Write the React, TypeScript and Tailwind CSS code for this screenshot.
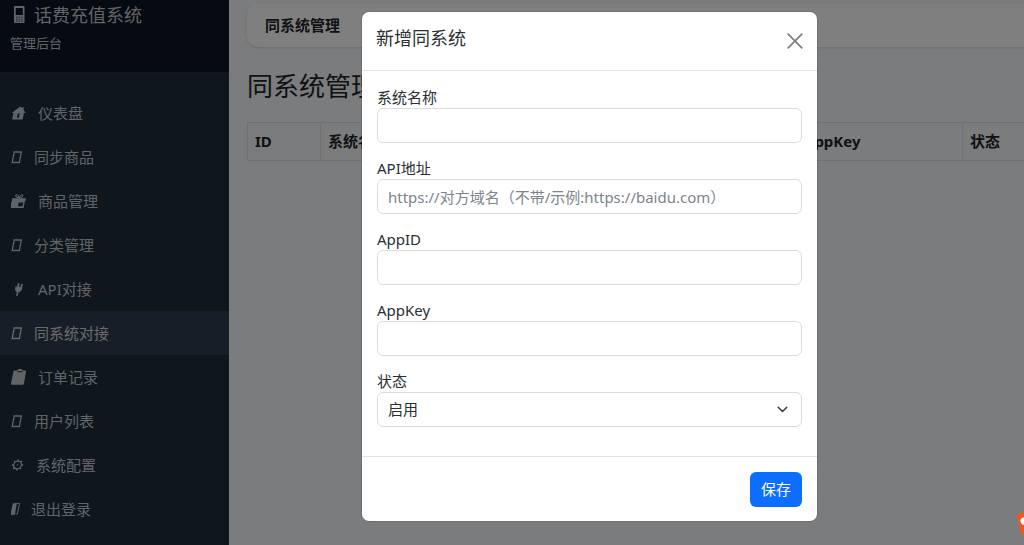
import type { ReactNode } from "react";

function PhoneIcon() {
  return (
    <svg width="12" height="18" viewBox="0 0 12 18" fill="none" aria-hidden="true">
      <path fillRule="evenodd" fill="currentColor" d="M1 0h8.500A1 1 0 0 1 10.500 1v15a1 1 0 0 1-1 1H1a1 1 0 0 1-1-1V1A1 1 0 0 1 1 0ZM1.700 2v7h7.100V2ZM2 10.700v.8h1.600v-.8Zm2.500 0v.8h1.600v-.8Zm2.500 0v.8h1.600v-.8ZM2 12.700v.8h1.600v-.8Zm2.500 0v.8h1.600v-.8Zm2.500 0v.8h1.600v-.8ZM2 14.700v.8h1.600v-.8Zm2.500 0v.8h1.600v-.8Zm2.500 0v.8h1.600v-.8Z" />
    </svg>
  );
}

function BoxIcon() {
  return (
    <svg width="12" height="14" viewBox="0 0 12 14" fill="none" stroke="currentColor" strokeWidth="1.300" aria-hidden="true">
      <path d="M3.200 2H10.300L8.300 12.500H1.200Z" />
    </svg>
  );
}

function HomeIcon() {
  return (
    <svg width="16" height="16" viewBox="0 0 16 16" fill="currentColor" aria-hidden="true">
      <path fillRule="evenodd" d="M9.300 1.600L11 3.100L11.300 2.300H12.900L12.500 4.700L14.700 8H12.900L11.700 14.500H1.200L2.400 8H.7ZM6.700 8.500L5.900 12.700H7.900L8.700 8.500Z" />
    </svg>
  );
}

function GiftIcon() {
  return (
    <svg width="16" height="16" viewBox="0 0 16 16" aria-hidden="true">
      <path fill="currentColor" fillRule="evenodd" d="M1.300 5.200H15L14.400 8H13.900L12.700 15H-.8L.4 8.500H.8ZM7.700 9.500L6.900 13.300H11.500L12.200 9.500Z" />
      <path fill="none" stroke="currentColor" strokeWidth="1.100" d="M8.300 4.900C6.500 4.700 3.900 3.500 4.700 2.200C5.500 1 7.500 2.200 8.300 4.900ZM8.300 4.900C9 2.200 11.200 1 11.700 2.200C12.200 3.700 10.200 4.900 8.300 4.900Z" />
    </svg>
  );
}

function PlugIcon() {
  return (
    <svg width="16" height="16" viewBox="0 0 16 16" aria-hidden="true">
      <path fill="currentColor" d="M4.500 5.300L11.500 6.200L10.900 8.500C10.100 10.300 8.700 11 7.500 11.200L6.700 15H5.200L5.700 11C4.200 10.300 3.800 8.600 4.200 7Z" />
      <path fill="none" stroke="currentColor" strokeWidth="1.800" d="M7 5.800L7.800 2.300M10 6.500L11.200 3" />
    </svg>
  );
}

function ClipboardIcon() {
  return (
    <svg width="16" height="18" viewBox="0 0 16 18" aria-hidden="true">
      <path fill="currentColor" fillRule="evenodd" d="M3.800 2.500H6.400C7 .6 11 .6 11.500 2.500H14.200Q15.200 2.500 15 3.500L12.900 15.700Q12.700 16.700 11.700 16.700H.8Q-.2 16.700 0 15.700L2.300 3.700Q2.600 2.500 3.800 2.500ZM6.500 3.300L6.300 4.300H11.300L11.500 3.300Z" />
    </svg>
  );
}

function GearIcon() {
  return (
    <svg width="14" height="14" viewBox="0 0 14 14" fill="none" stroke="currentColor" aria-hidden="true">
      <g transform="translate(1 0) skewX(-8)">
        <circle cx="6.500" cy="7" r="3.900" strokeWidth="1.200" />
        <circle cx="6.500" cy="7" r=".4" strokeWidth=".8" />
        <path strokeWidth="1.300" d="M6.500 3V1.400M6.500 11v1.600M10.500 7h1.600M2.500 7H.9M9.300 4.200l1.200-1.200M3.700 9.800l-1.200 1.200M9.300 9.800l1.200 1.200M3.700 4.200L2.500 3" />
      </g>
    </svg>
  );
}

function DoorIcon() {
  return (
    <svg width="9" height="14" viewBox="0 0 9 14" aria-hidden="true">
      <path fill="currentColor" d="M1.800 1.500L6 .8L3.800 12.700L-.7 13Z" />
      <path fill="none" stroke="currentColor" d="M6.200 1.500H8.500L6.400 12H4.400" />
    </svg>
  );
}

const navItems: { label: string; icon: ReactNode; active?: boolean }[] = [
  { label: "仪表盘", icon: <HomeIcon /> },
  { label: "同步商品", icon: <BoxIcon /> },
  { label: "商品管理", icon: <GiftIcon /> },
  { label: "分类管理", icon: <BoxIcon /> },
  { label: "API对接", icon: <PlugIcon /> },
  { label: "同系统对接", icon: <BoxIcon />, active: true },
  { label: "订单记录", icon: <ClipboardIcon /> },
  { label: "用户列表", icon: <BoxIcon /> },
  { label: "系统配置", icon: <GearIcon /> },
  { label: "退出登录", icon: <DoorIcon /> },
];

function Sidebar() {
  return (
    <aside className="w-[229px] shrink-0 bg-[#1e2c39] text-[#c3c8ce]">
      <div className="border-b border-[#2a323e] bg-[#0c1424] px-2.5 pt-px pb-[19px]">
        <h1 className="flex items-center gap-2 pl-1 text-lg leading-7">
          <PhoneIcon />
          话费充值系统
        </h1>
        <p className="pt-1 text-[13px] leading-5">管理后台</p>
      </div>
      <nav className="pt-[18px]">
        {navItems.map((item) => (
          <a
            key={item.label}
            href="#"
            className={
              item.active
                ? "flex h-11 items-center gap-[11px] bg-[#303d4f] pl-[11px] text-[#d4d6d9]"
                : "flex h-11 items-center gap-[11px] pl-[11px]"
            }
          >
            {item.icon}
            {item.label}
          </a>
        ))}
      </nav>
    </aside>
  );
}

function Content() {
  const cell = "border border-[#dee2e6] px-[7px] py-2 text-left leading-[21px] font-bold whitespace-nowrap";
  return (
    <main className="min-w-0 flex-1 overflow-hidden pt-1 pl-[18px]">
      <div className="mr-[-155px] rounded-xl bg-white px-[18px] py-[11px] font-semibold leading-[21px] shadow-sm">
        同系统管理
      </div>
      <h2 className="mt-[23px] mb-5 text-[26px] leading-8">同系统管理</h2>
      <table className="w-[932px] table-fixed border-collapse">
        <thead>
          <tr>
            <th className={`w-[73px] ${cell}`}>ID</th>
            <th className={`w-[150px] ${cell}`}>系统名称</th>
            <th className={`w-[170px] ${cell}`}>API地址</th>
            <th className={`w-[156px] ${cell}`}>AppID</th>
            <th className={`w-[166px] ${cell}`}>AppKey</th>
            <th className={cell}>状态</th>
          </tr>
        </thead>
      </table>
    </main>
  );
}

function TextField({ id, label, placeholder }: { id: string; label: string; placeholder?: string }) {
  return (
    <div className="mb-3.5">
      <label htmlFor={id} className="block leading-[22px]">{label}</label>
      <input
        id={id}
        type="text"
        placeholder={placeholder}
        className="block h-[35px] w-full rounded-md border border-[#d9dde3] bg-white px-2.5 outline-none placeholder:text-[#7c848b] focus:border-blue-300"
      />
    </div>
  );
}

function SystemDialog() {
  return (
    <div className="absolute inset-0 flex items-start justify-center bg-black/50 pt-3 pl-[155px]">
      <form
        role="dialog"
        aria-labelledby="dialog-title"
        className="w-full max-w-[455px] rounded-[7px] bg-white text-[#2b2f33] outline outline-black/10"
        onSubmit={(e) => e.preventDefault()}
      >
        <div className="flex items-start justify-between border-b border-[#dee2e6] px-3.5 pt-3.5 pb-3.5">
          <h2 id="dialog-title" className="text-lg leading-6">新增同系统</h2>
          <button type="button" aria-label="关闭" className="flex h-[30px] items-center text-[#808080]">
            <svg width="16" height="16" viewBox="0 0 16 16" fill="none" stroke="currentColor" strokeWidth="1.800" strokeLinecap="round" aria-hidden="true">
              <path d="M1.200 1.200L14.800 14.800M14.800 1.200L1.200 14.800" />
            </svg>
          </button>
        </div>
        <div className="px-[15px] pt-[15px] pb-[15px]">
          <TextField id="name" label="系统名称" />
          <TextField id="url" label="API地址" placeholder="https://对方域名（不带/示例:https://baidu.com）" />
          <TextField id="appid" label="AppID" />
          <TextField id="appkey" label="AppKey" />
          <div className="mb-3.5">
            <label htmlFor="status" className="block leading-[22px]">状态</label>
            <div className="relative">
              <select id="status" className="block h-[35px] w-full appearance-none rounded-md border border-[#d9dde3] bg-white pr-8 pl-2.5 outline-none">
                <option>启用</option>
                <option>禁用</option>
              </select>
              <svg className="pointer-events-none absolute top-3 right-3.5" width="11" height="11" viewBox="0 0 11 11" fill="none" stroke="#343a40" strokeWidth="1.500" strokeLinecap="round" strokeLinejoin="round" aria-hidden="true">
                <path d="M1.200 3.200L5.500 7.500L9.800 3.200" />
              </svg>
            </div>
          </div>
        </div>
        <div className="flex justify-end border-t border-[#dee2e6] px-[15px] pt-[15px] pb-3.5">
          <button type="submit" className="h-[35px] rounded-md bg-[#0d6efd] px-[11px] text-white">保存</button>
        </div>
      </form>
    </div>
  );
}

export default function App() {
  return (
    <div className="relative flex min-h-screen overflow-hidden bg-[#f6f8fa] font-['Noto_Sans','Noto_Sans_CJK_SC',sans-serif] text-[15px] text-[#212529]">
      <Sidebar />
      <Content />
      <SystemDialog />
      <svg className="absolute right-0 bottom-2" width="7" height="25" viewBox="0 0 7 25" aria-hidden="true">
        <path fill="#f4561f" d="M0 4Q0 2 2 1.500L7 .5V24L4 21Z" />
        <path fill="#fff" d="M7 5.500C4 5.500 3.200 8 3.600 9.500C4 12 5.500 13 7 13Z" />
      </svg>
    </div>
  );
}
